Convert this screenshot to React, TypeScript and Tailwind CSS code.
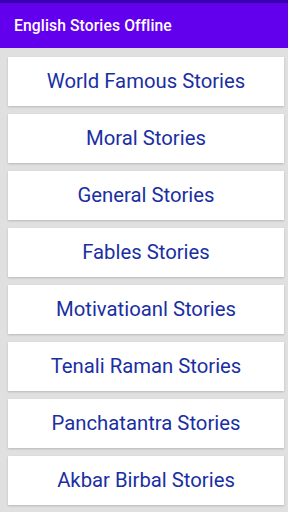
import React from "react";

const items = [
  "World Famous Stories",
  "Moral Stories",
  "General Stories",
  "Fables Stories",
  "Motivatioanl Stories",
  "Tenali Raman Stories",
  "Panchatantra Stories",
  "Akbar Birbal Stories",
];

export default function App() {
  return (
    <div
      className="w-[288px] h-[512px] overflow-hidden bg-[#e0e0e0]"
      style={{ fontFamily: "Roboto, 'Liberation Sans', sans-serif" }}
    >
      <div className="h-[3px] bg-[#3a00b0]" />
      <div className="h-[45px] bg-[#6200ee] flex items-center pl-[14px]">
        <span className="text-white text-[15.7px] font-medium tracking-[0.1px]">English Stories Offline</span>
      </div>
      <div className="flex flex-col gap-[8px] pt-[9px] pl-[8px] pr-[4px]">
        {items.map((t) => (
          <div
            key={t}
            className="h-[49px] bg-white flex items-center justify-center shadow-[0_1px_2px_rgba(0,0,0,0.18)]"
          >
            <span className="text-[20.3px] text-[#1a2fa3]">{t}</span>
          </div>
        ))}
      </div>
    </div>
  );
}
